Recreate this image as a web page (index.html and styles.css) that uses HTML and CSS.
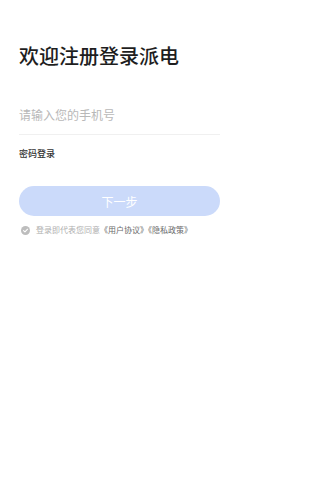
FILE: index.html
```html
<!DOCTYPE html>
<html lang="zh-CN">
<head>
<meta charset="utf-8">
<meta name="viewport" content="width=device-width, initial-scale=1">
<title>注册登录</title>
<link rel="stylesheet" href="styles.css">
</head>
<body>
<main class="page">
  <h1 class="title">欢迎注册登录派电</h1>
  <div class="field">
    <input class="phone" type="tel" placeholder="请输入您的手机号">
  </div>
  <div class="pwd-login">密码登录</div>
  <button class="next" type="button">下一步</button>
  <div class="agree">
    <svg class="check" viewBox="0 0 10 10" width="9" height="9" aria-hidden="true">
      <circle cx="5" cy="5" r="5" fill="#bdbdbd"/>
      <path d="M2.8 5.1 L4.4 6.6 L7.3 3.6" fill="none" stroke="#fff" stroke-width="1.2" stroke-linecap="round" stroke-linejoin="round"/>
    </svg>
    <span class="agree-text">登录即代表您同意<span class="link">《用户协议》</span><span class="link">《隐私政策》</span></span>
  </div>
</main>
</body>
</html>
```
FILE: styles.css
```css
* { box-sizing: border-box; }
html, body {
  margin: 0;
  padding: 0;
  background: #ffffff;
}
body {
  font-family: "Noto Sans CJK SC", "Noto Sans", sans-serif;
  color: #222;
}
.page {
  width: 239px;
  padding: 42px 19px 0 19px;
  display: flex;
  flex-direction: column;
}
.title {
  margin: 0;
  font-size: 20px;
  line-height: 28px;
  font-weight: 500;
  color: #1e1e1e;
}
.field {
  margin-top: 37px;
  border-bottom: 1px solid #f0f0f0;
  padding-bottom: 11px;
}
.phone {
  display: block;
  width: 100%;
  border: none;
  outline: none;
  padding: 0;
  margin: 0;
  height: 16px;
  line-height: 16px;
  font-family: inherit;
  font-size: 12px;
  color: #222;
  background: transparent;
}
.phone::placeholder {
  color: #b8b8b8;
}
.pwd-login {
  margin-top: 13px;
  font-size: 9px;
  line-height: 12px;
  color: #333;
  font-weight: 500;
}
.next {
  margin-top: 26px;
  height: 30px;
  width: 100%;
  border: none;
  border-radius: 15px;
  background: #cbdafa;
  color: #ffffff;
  font-family: inherit;
  font-size: 12px;
  padding: 0;
}
.agree {
  margin-top: 9px;
  display: flex;
  align-items: center;
  gap: 6px;
  padding-left: 2px;
}
.check {
  flex: none;
  display: block;
}
.agree-text {
  font-size: 8px;
  line-height: 10px;
  color: #b0b0b0;
  white-space: nowrap;
}
.link {
  color: #6a6a6a;
}
```
